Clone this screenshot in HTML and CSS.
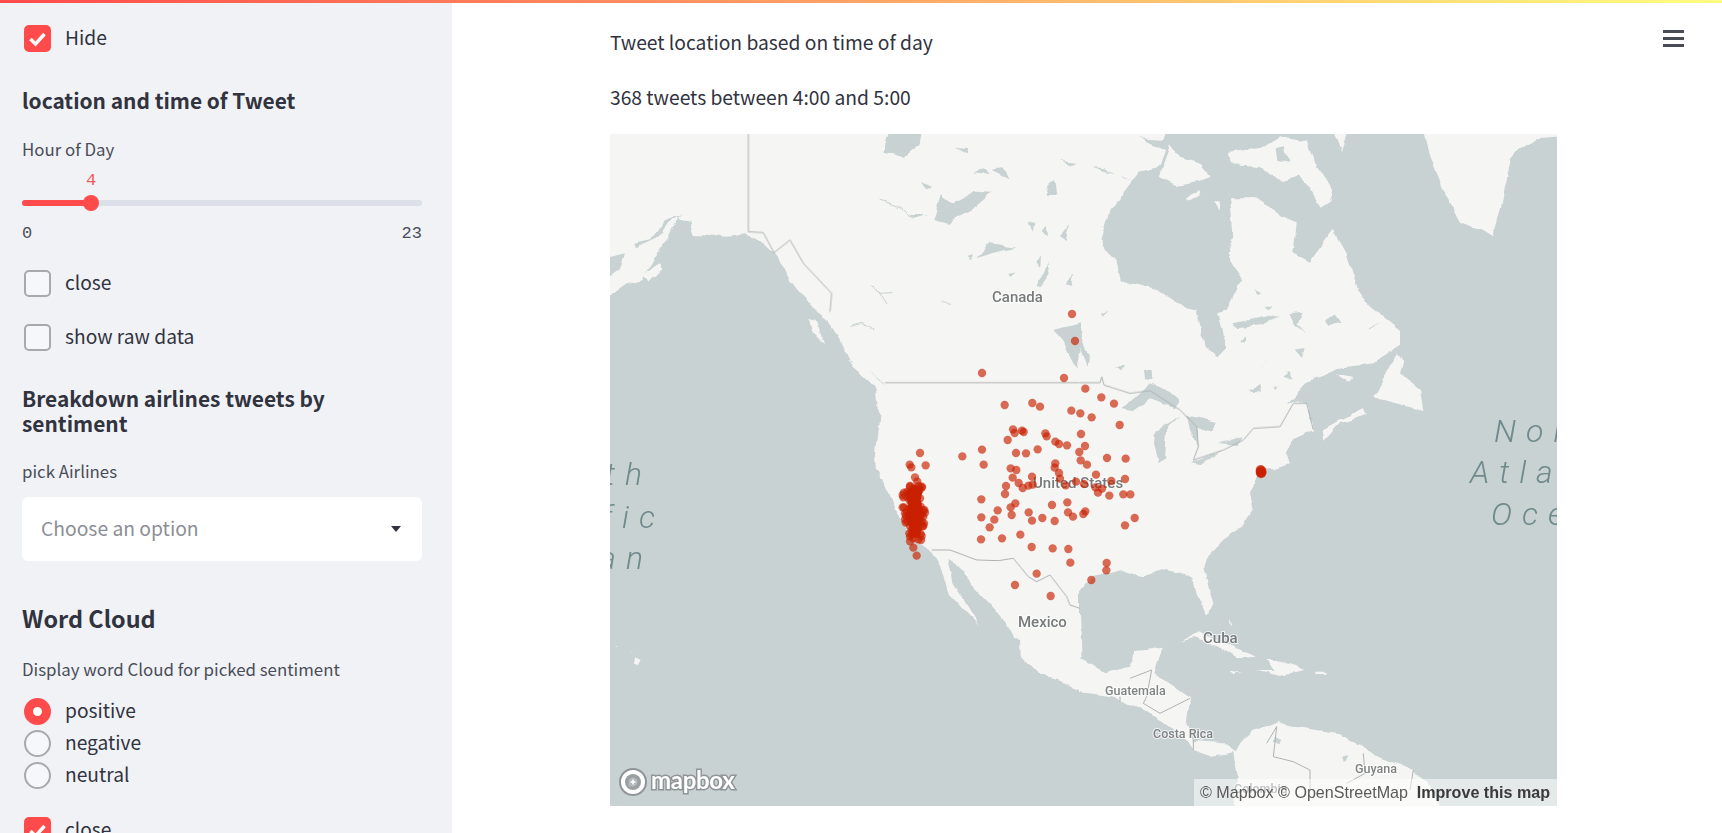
FILE: index.html
```html
<!DOCTYPE html>
<html lang="en">
<head>
<meta charset="utf-8">
<title>Tweet location</title>
<link rel="stylesheet" href="styles.css">
</head>
<body>
<div class="top-bar"></div>
<div class="app">
  <aside class="sidebar">
    <label class="row row-first"><span class="box box-on"><svg viewBox="0 0 27 27" class="tick"><path d="M6.5 14l5 5 9-10"/></svg></span><span class="row-text">Hide</span></label>
    <h3 class="h-small h-location">location and time of Tweet</h3>
    <div class="field-label label-hour">Hour of Day</div>
    <div class="slider">
      <div class="slider-value"><span class="slider-num">4</span></div>
      <div class="track"><div class="track-fill"></div><div class="thumb"></div></div>
      <div class="ticks"><span>0</span><span>23</span></div>
    </div>
    <label class="row row-close"><span class="box"></span><span class="row-text">close</span></label>
    <label class="row row-raw"><span class="box"></span><span class="row-text">show raw data</span></label>
    <h3 class="h-small h-breakdown">Breakdown airlines tweets by sentiment</h3>
    <div class="field-label label-pick">pick Airlines</div>
    <div class="select"><span class="select-text">Choose an option</span><svg class="caret" viewBox="0 0 10 6"><path d="M0 0h10L5 6z"/></svg></div>
    <h2 class="h-large">Word Cloud</h2>
    <div class="field-label label-display">Display word Cloud for picked sentiment</div>
    <div class="radios">
      <label class="row"><span class="radio radio-on"></span><span class="row-text">positive</span></label>
      <label class="row"><span class="radio"></span><span class="row-text">negative</span></label>
      <label class="row"><span class="radio"></span><span class="row-text">neutral</span></label>
    </div>
    <label class="row row-last"><span class="box box-on"><svg viewBox="0 0 27 27" class="tick"><path d="M6.5 14l5 5 9-10"/></svg></span><span class="row-text">close</span></label>
  </aside>
  <main class="main">
    <button class="menu" aria-label="menu"><span></span><span></span><span></span></button>
    <p class="line line-one">Tweet location based on time of day</p>
    <p class="line line-two">368 tweets between 4:00 and 5:00</p>
    <div class="map">
      <svg class="map-svg" viewBox="610 134 947 672">
        <defs>
          <filter id="coast" filterUnits="userSpaceOnUse" x="560" y="84" width="1047" height="772" color-interpolation-filters="sRGB">
            <feTurbulence type="fractalNoise" baseFrequency=".045" numOctaves="3" seed="4" result="noise"/>
            <feDisplacementMap in="SourceGraphic" in2="noise" scale="8" xChannelSelector="R" yChannelSelector="G"/>
            <feGaussianBlur stdDeviation=".35"/>
          </filter>
        </defs>
        <rect class="land" x="610" y="134" width="947" height="672"/>
        <g class="terrain">
        <!-- top-left quadrant -->
        <g transform="translate(600 120) scale(.33333)">
          <path class="water" d="M-10 530L30 525 80 490 130 478 150 440 175 400 215 330 245 285 205 305 175 350 105 382 100 368 150 358 195 300 225 290 245 300 275 305 285 340 320 340 370 350 410 348 440 340 480 362 520 400 560 450 600 520 640 570 680 600 720 660 750 720 790 770 830 810 838 880 835 920 825 1000 828 1055H-10z"/>
          <path class="water" d="M-10 420L75 400 60 450-10 495z"/>
          <path class="land" d="M135 462L180 425 187 450 150 488zM625 600L650 605 672 672 640 640zM740 722L775 735 820 785 790 765zM545 425L575 440 610 510 640 570 620 545 570 480zM500 350L530 395 560 440 520 400z"/>
          <path class="water" d="M850 95L880 -10H980L965 70 910 112 870 100zM960 180L990 195 975 205zM1000 300L1022 220 1060 250 1130 212 1178 215 1115 270 1040 312zM1338 200L1365 178 1372 225 1345 225zM1130 412L1170 370 1250 380 1180 395zM1100 410L1115 405 1112 428zM1312 500L1345 435 1352 460 1325 505zM1305 425L1320 410 1318 442zM1365 630L1440 610V680L1430 745 1405 700 1385 650zM1115 160L1150 145 1170 165zM1175 150L1210 135 1225 175zM1380 120L1430 125 1420 135zM1065 80L1105 85 1100 100zM1280 310L1300 305 1295 335zM1325 330L1340 320 1345 350zM1385 350L1410 315 1400 360zM1400 490L1425 460 1420 495zM1225 465L1248 460 1230 475zM920 285L985 285 940 295 920 285z"/>
          <path class="thin" d="M845 240L900 262 935 295M815 490L855 555M830 520L875 518M1020 545L1050 550M755 620L790 610 820 630"/>
          <path class="water" d="M805 750L850 790 870 835 855 800z"/>
        </g>
        <!-- top-right quadrant -->
        <g transform="translate(1080 120) scale(.33333)">
          <path class="water" d="M65 360L90 270 130 215 175 155 240 140 255 90 175 55 250 60 275 -10H1020L1050 120 1090 210 1140 310 1200 330 1240 355 1260 270 1295 110 1320 80 1370 55 1500 45V1050H550L560 1050 630 1030 615 1000 640 960 700 930 680 850 650 845 620 855 700 770 770 745 880 730 960 680 960 630 860 550 830 500 800 400 760 330 690 425 640 400 650 310 600 290 540 235 450 235 460 340 440 400 485 480 440 570 415 580 440 680 410 710 370 670 350 570 290 550 230 510 120 480 105 420 65 380z"/>
          <path class="land" d="M240 170L270 70 300 110 360 130 395 170 370 180 290 195zM450 100L560 75 600 50 680 60 700 120 750 200 755 240 725 260 660 170 600 185 540 135 455 130zM740 -10H810L780 100zM320 240L355 210 360 225 330 245zM400 240L420 245 415 275zM880 830L950 700 970 720 960 760 1020 810 1030 870 960 850zM730 965L780 910 860 885 850 860 780 900 725 930zM770 760L820 770 810 785zM1060 145L1095 120 1075 150z"/>
          <path class="water" d="M590 90L615 85 625 125 595 120zM30 140L70 145 100 160 60 150zM125 170L155 180 130 175zM65 585L90 572 70 590zM460 610L600 580 540 615 480 625zM625 580L665 575 650 610 680 640 640 610zM735 600L765 580 785 610 745 615zM540 740L570 705 550 730zM610 770L630 755 640 780zM510 810L535 795 540 815zM580 800L595 800 590 810zM860 630L900 605 870 620zM195 750L218 745 220 778 198 775zM0 630L30 710 20 745 0 680zM105 735L135 735 120 748zM480 670L495 650 495 670zM650 695L680 690 672 720zM520 510L545 520 530 525zM555 565L580 555 570 570z"/>
          <path class="water" d="M130 865L210 790 300 840 285 862 210 835 160 870zM225 930L300 885 262 920 255 1020 235 1032 222 970zM320 885L410 905 400 935 350 920 355 980 330 930zM332 1030L430 990 362 1035zM415 970L490 948 470 975z"/>
        </g>
        <!-- bottom-left quadrant -->
        <g transform="translate(600 470) scale(.33333)">
          <path class="water" d="M830 -5L860 60 890 120 930 200 990 240 1020 290 1045 370 1110 440 1160 490 1260 510 1262 560 1310 610 1440 660V1050H-10V-5z"/>
          <path class="water" d="M1045 270L1080 290 1105 335 1175 410 1240 490 1262 565 1150 490 1060 340z"/>
          <path class="land" d="M105 565L122 572 112 592 102 585zM52 528L60 530 56 534zM88 545L96 548 92 551z"/>
        </g>
        <!-- bottom-right quadrant -->
        <g transform="translate(1080 470) scale(.33333)">
          <path class="water" d="M550 -5L525 45 510 70 520 110 490 170 430 210 380 260 370 290 400 400 385 435 350 370 340 330 310 310 250 300 180 320 130 300 40 320 0 370 0 430 5 560 70 610 150 590 170 540 245 530 220 610 330 685 320 760 340 810 420 815 470 850 510 780 600 750 640 770 780 790 850 830 890 860 1000 900 1060 960 1090 1050H1500V-5z"/>
          <path class="water" d="M-10 665L100 680 170 710 240 750 320 810 340 840 400 860 460 850 470 920 465 1050H-10z"/>
          <path class="land" d="M305 515L350 490 430 520 535 560 470 565 420 530 340 505zM560 570L600 570 670 600 600 615 535 600 580 600zM448 605L485 610 460 615zM703 605H733V612H703zM448 445L458 470 452 465z"/>
          <path class="water" d="M590 800L610 810 600 825 588 815zM790 860L805 855 795 880z"/>
        </g>
        </g>
        <!-- country borders -->
        <g transform="translate(600 120) scale(.33333)">
          <path class="border" d="M445 40V335L490 338 522 398 570 360 610 430 695 520 690 575M855 788H1440"/>
        </g>
        <g transform="translate(1080 120) scale(.33333)">
          <path class="border" d="M0 788H60L65 770 72 795 150 820 210 812 300 870 350 920 355 980 340 1020 430 990 490 960 520 925 600 920 640 850 680 850 700 930"/>
        </g>
        <g transform="translate(600 470) scale(.33333)">
          <path class="border" d="M995 240L1050 240 1130 270 1195 272 1240 265 1285 320 1310 335 1350 315 1400 380 1410 405 1440 415"/>
        </g>
        <g transform="translate(1080 470) scale(.33333)">
          <path class="border" d="M150 625L215 600 200 680 190 700 240 730 330 685M120 680V695M340 810V840M560 820L590 770 580 860 640 875 690 900 690 960M850 850L855 910 800 940M1000 900L990 960"/>
        </g>
        <!-- ocean names -->
        <text class="ocean" x="652" y="485" text-anchor="end">North</text>
        <text class="ocean" x="665" y="528" text-anchor="end">Pacific</text>
        <text class="ocean" x="653" y="569" text-anchor="end">Ocean</text>
        <text class="ocean" x="1494" y="442">North</text>
        <text class="ocean" x="1470" y="483">Atlantic</text>
        <text class="ocean" x="1491" y="525">Ocean</text>
        <!-- country names -->
        <text class="place" x="992" y="302">Canada</text>
        <text class="place" x="1033" y="488">United States</text>
        <text class="place" x="1018" y="627">Mexico</text>
        <text class="place" x="1203" y="643">Cuba</text>
        <text class="place place-small" x="1105" y="695">Guatemala</text>
        <text class="place place-small" x="1153" y="738">Costa Rica</text>
        <text class="place place-small" x="1355" y="773">Guyana</text>
        <text class="place place-small" x="1234" y="793">Colombia</text>
        <!-- tweet points -->
        <g class="dots" transform="translate(860 380) scale(.33333)">
          <path class="cluster-core" d="M135 335L160 315 190 320 182 360 190 400 188 440 178 470 150 475 148 440 135 410 145 375z"/>
          <circle r="12.5" cx="636" cy="-198"/><circle r="12.5" cx="645" cy="-117"/><circle r="12.5" cx="366" cy="-21"/><circle r="12.5" cx="612" cy="-6"/>
          <circle r="12.5" cx="676" cy="26"/><circle r="12.5" cx="724" cy="52"/><circle r="12.5" cx="762" cy="71"/><circle r="12.5" cx="434" cy="75"/><circle r="12.5" cx="517" cy="69"/><circle r="12.5" cx="540" cy="80"/><circle r="12.5" cx="634" cy="92"/><circle r="12.5" cx="661" cy="100"/><circle r="12.5" cx="695" cy="112"/><circle r="12.5" cx="779" cy="135"/><circle r="12.5" cx="459" cy="148"/><circle r="12.5" cx="464" cy="159"/><circle r="12.5" cx="486" cy="152"/><circle r="12.5" cx="491" cy="156"/><circle r="12.5" cx="443" cy="180"/><circle r="12.5" cx="556" cy="160"/><circle r="12.5" cx="560" cy="169"/><circle r="12.5" cx="663" cy="162"/><circle r="12.5" cx="586" cy="185"/><circle r="12.5" cx="597" cy="192"/><circle r="12.5" cx="621" cy="196"/><circle r="12.5" cx="675" cy="198"/><circle r="12.5" cx="658" cy="216"/><circle r="12.5" cx="533" cy="208"/><circle r="12.5" cx="468" cy="219"/><circle r="12.5" cx="498" cy="220"/><circle r="12.5" cx="366" cy="209"/><circle r="12.5" cx="307" cy="229"/><circle r="12.5" cx="371" cy="254"/><circle r="12.5" cx="741" cy="234"/><circle r="12.5" cx="797" cy="236"/><circle r="12.5" cx="662" cy="241"/><circle r="12.5" cx="681" cy="254"/><circle r="12.5" cx="586" cy="250"/><circle r="12.5" cx="584" cy="263"/><circle r="12.5" cx="452" cy="265"/><circle r="12.5" cx="469" cy="270"/><circle r="12.5" cx="597" cy="279"/><circle r="12.5" cx="708" cy="284"/><circle r="12.5" cx="458" cy="293"/><circle r="12.5" cx="516" cy="290"/><circle r="12.5" cx="600" cy="296"/><circle r="12.5" cx="795" cy="297"/><circle r="12.5" cx="476" cy="309"/><circle r="12.5" cx="505" cy="317"/><circle r="12.5" cx="518" cy="314"/><circle r="12.5" cx="488" cy="324"/><circle r="12.5" cx="617" cy="316"/><circle r="12.5" cx="648" cy="305"/><circle r="12.5" cx="672" cy="312"/><circle r="12.5" cx="754" cy="303"/><circle r="12.5" cx="706" cy="322"/><circle r="12.5" cx="726" cy="326"/><circle r="12.5" cx="714" cy="338"/><circle r="12.5" cx="438" cy="318"/><circle r="12.5" cx="435" cy="342"/><circle r="12.5" cx="748" cy="347"/><circle r="12.5" cx="790" cy="343"/><circle r="12.5" cx="811" cy="343"/><circle r="12.5" cx="364" cy="358"/><circle r="12.5" cx="622" cy="367"/><circle r="12.5" cx="466" cy="370"/><circle r="12.5" cx="452" cy="382"/><circle r="12.5" cx="413" cy="391"/><circle r="12.5" cx="576" cy="375"/><circle r="12.5" cx="506" cy="397"/><circle r="12.5" cx="624" cy="397"/><circle r="12.5" cx="676" cy="394"/><circle r="12.5" cx="670" cy="402"/><circle r="12.5" cx="639" cy="410"/><circle r="12.5" cx="455" cy="405"/><circle r="12.5" cx="364" cy="412"/><circle r="12.5" cx="403" cy="419"/><circle r="12.5" cx="547" cy="414"/><circle r="12.5" cx="516" cy="422"/><circle r="12.5" cx="584" cy="423"/><circle r="12.5" cx="389" cy="442"/><circle r="12.5" cx="824" cy="414"/><circle r="12.5" cx="795" cy="436"/><circle r="12.5" cx="481" cy="464"/><circle r="12.5" cx="363" cy="478"/><circle r="12.5" cx="426" cy="475"/><circle r="12.5" cx="515" cy="501"/><circle r="12.5" cx="578" cy="505"/><circle r="12.5" cx="625" cy="507"/><circle r="12.5" cx="631" cy="548"/><circle r="12.5" cx="740" cy="549"/><circle r="12.5" cx="739" cy="571"/><circle r="12.5" cx="694" cy="600"/><circle r="12.5" cx="530" cy="581"/><circle r="12.5" cx="465" cy="615"/><circle r="12.5" cx="572" cy="648"/>
          <circle r="12.5" cx="180" cy="219"/><circle r="12.5" cx="149" cy="254"/><circle r="12.5" cx="154" cy="262"/><circle r="12.5" cx="197" cy="256"/><circle r="12.5" cx="165" cy="292"/><circle r="12.5" cx="172" cy="305"/><circle r="12.5" cx="170" cy="527"/><circle r="12.5" cx="160" cy="503"/><circle r="12.5" cx="150" cy="484"/><circle r="12.5" cx="183" cy="480"/>
          <circle r="12.5" cx="150" cy="320"/><circle r="12.5" cx="185" cy="320"/><circle r="12.5" cx="142" cy="335"/><circle r="12.5" cx="160" cy="325"/><circle r="12.5" cx="178" cy="332"/><circle r="12.5" cx="140" cy="350"/><circle r="12.5" cx="155" cy="345"/><circle r="12.5" cx="170" cy="345"/><circle r="12.5" cx="148" cy="360"/><circle r="12.5" cx="165" cy="358"/><circle r="12.5" cx="180" cy="355"/><circle r="12.5" cx="155" cy="372"/><circle r="12.5" cx="172" cy="370"/><circle r="12.5" cx="132" cy="382"/><circle r="12.5" cx="148" cy="385"/><circle r="12.5" cx="165" cy="382"/><circle r="12.5" cx="182" cy="380"/><circle r="12.5" cx="190" cy="392"/><circle r="12.5" cx="140" cy="395"/><circle r="12.5" cx="155" cy="398"/><circle r="12.5" cx="172" cy="395"/><circle r="12.5" cx="185" cy="405"/><circle r="12.5" cx="138" cy="408"/><circle r="12.5" cx="150" cy="410"/><circle r="12.5" cx="165" cy="410"/><circle r="12.5" cx="178" cy="412"/><circle r="12.5" cx="142" cy="425"/><circle r="12.5" cx="155" cy="422"/><circle r="12.5" cx="170" cy="425"/><circle r="12.5" cx="185" cy="425"/><circle r="12.5" cx="150" cy="438"/><circle r="12.5" cx="165" cy="438"/><circle r="12.5" cx="188" cy="438"/><circle r="12.5" cx="155" cy="450"/><circle r="12.5" cx="172" cy="450"/><circle r="12.5" cx="155" cy="462"/><circle r="12.5" cx="170" cy="462"/><circle r="12.5" cx="182" cy="462"/><circle r="12.5" cx="160" cy="475"/>
          <circle r="12.5" cx="128" cy="345"/><circle r="12.5" cx="130" cy="352"/><circle r="12.5" cx="132" cy="338"/><circle r="12.5" cx="150" cy="318"/><circle r="12.5" cx="186" cy="322"/><circle r="12.5" cx="176" cy="318"/><circle r="12.5" cx="128" cy="382"/><circle r="12.5" cx="193" cy="390"/><circle r="12.5" cx="195" cy="398"/><circle r="12.5" cx="190" cy="410"/><circle r="12.5" cx="135" cy="400"/><circle r="12.5" cx="135" cy="418"/><circle r="12.5" cx="137" cy="428"/><circle r="12.5" cx="190" cy="438"/><circle r="12.5" cx="192" cy="430"/><circle r="12.5" cx="148" cy="460"/><circle r="12.5" cx="185" cy="468"/><circle r="12.5" cx="150" cy="470"/><circle r="12.5" cx="175" cy="478"/>
          <circle r="15" cx="1203" cy="272"/><circle r="15" cx="1204" cy="278"/><circle r="15" cx="1202" cy="270"/><circle r="15" cx="1205" cy="275"/><circle r="15" cx="1203" cy="280"/><circle r="15" cx="1202" cy="276"/>
        </g>
        <!-- mapbox logo -->
        <g class="logo">
          <circle class="logo-ring" cx="633" cy="782" r="13"/>
          <circle class="logo-core" cx="633" cy="782" r="8"/>
          <path class="logo-pin" d="M628.5 786.5V782a4.5 4.5 0 1 1 4.5 4.5z"/>
          <path class="logo-plus" d="M633 779.5v5M630.5 782h5"/>
          <text class="logo-word" x="651" y="789">mapbox</text>
        </g>
      </svg>
      <div class="attribution"><span>© Mapbox © OpenStreetMap</span><strong>Improve this map</strong></div>
    </div>
  </main>
</div>
</body>
</html>
```
FILE: styles.css
```css
* { box-sizing: border-box; }
html, body { margin: 0; height: 100%; overflow: hidden; background: #fff; }
body {
  display: flex;
  flex-direction: column;
  font-family: "Noto Sans CJK SC", "Noto Sans", sans-serif;
  color: #31333f;
}
.top-bar { height: 3px; flex: none; background: linear-gradient(90deg, #ff4b4b, #fffd80); }
.app { flex: 1; display: flex; min-height: 0; }

/* sidebar */
.sidebar {
  width: 452px; flex: none; background: #f0f2f6; overflow: hidden;
  padding: 22px 30px 0 22px;
}
.row { display: flex; align-items: center; height: 27px; padding-left: 2px; font-size: 19.2px; color: #31333f; }
.row-text { margin-left: 14px; line-height: 25px; padding-bottom: 2px; }
.box, .radio {
  width: 27px; height: 27px; flex: none; display: block;
  border: 2px solid #a6a9ae; background: #f6f7fa; border-radius: 5px;
}
.box-on { background: #ff4b4b; border-color: #ff4b4b; position: relative; }
.tick { position: absolute; left: -2px; top: -2px; width: 27px; height: 27px; }
.tick path { fill: none; stroke: #fff; stroke-width: 3.4; }
.radio { border-radius: 50%; }
.radio-on { background: #fff; border: 9px solid #ff4b4b; }
.h-small { margin: 0; font-size: 20.9px; line-height: 25px; font-weight: 700; color: #31333f; }
.h-location { margin-top: 34px; line-height: 28px; }
.h-breakdown { margin-top: 35px; }
.h-large { margin: 41px 0 0; padding-bottom: 1px; font-size: 23.4px; line-height: 32px; font-weight: 700; color: #31333f; }
.field-label { font-size: 16.85px; line-height: 20px; color: #4a4d58; }
.label-hour { margin-top: 25px; }
.label-pick { margin-top: 25px; }
.label-display { margin-top: 24px; }
.slider { margin-top: 12px; }
.slider-value { position: relative; height: 18px; }
.slider-num { position: absolute; left: 64px; top: 1px; font: 17px/18px "Liberation Mono", monospace; color: #ef5b5b; }
.track { position: relative; height: 6px; margin-top: 11px; border-radius: 3px; background: #dce0e8; }
.track-fill { width: 69px; height: 6px; border-radius: 3px; background: #ff4b4b; }
.thumb { position: absolute; left: 61px; top: -5px; width: 16px; height: 16px; border-radius: 50%; background: #ff4b4b; }
.ticks { display: flex; justify-content: space-between; margin-top: 19px; font: 17px/18px "Liberation Mono", monospace; color: #4a4d58; }
.row-close { margin-top: 27px; }
.row-raw { margin-top: 27px; }
.select {
  margin-top: 16px; height: 64px; border-radius: 6px; background: #fff;
  display: flex; align-items: center; justify-content: space-between;
  padding: 0 21px 0 19px; font-size: 19.3px; color: #8b8e95;
}
.select-text { padding-bottom: 2px; }
.caret { width: 10px; height: 6px; }
.caret path { fill: #31333f; }
.radios { margin-top: 19px; display: flex; flex-direction: column; gap: 5px; }
.row-last { margin-top: 28px; }

/* main */
.main { flex: 1; position: relative; padding: 27px 0 0 158px; }
.menu {
  position: absolute; left: 1211px; top: 27px; width: 21px; height: 17px; padding: 0;
  border: 0; background: none; display: flex; flex-direction: column; justify-content: space-between;
}
.menu span { display: block; height: 3px; width: 21px; background: #4a4c55; }
.line { margin: 0; font-size: 19.25px; line-height: 24px; color: #31333f; }
.line-two { margin-top: 31px; }
.map { position: relative; width: 947px; height: 672px; margin-top: 25px; overflow: hidden; }
.map-svg { display: block; width: 947px; height: 672px; filter: blur(.35px); }
.terrain { filter: url(#coast); }
.land { fill: #f5f5f3; }
.water { fill: #c9d2d3; }
.border { fill: none; stroke: #aeb3b4; stroke-width: 3; }
.thin { fill: none; stroke: #c9d2d3; stroke-width: 3; }
.dots circle { fill: #c82000; fill-opacity: .66; }
.cluster-core { fill: #c92200; }
.ocean { font: italic 300 32px Roboto, sans-serif; letter-spacing: 10px; fill: #6f8a8c; }
.place {
  font: 500 15px Roboto, sans-serif; fill: #777a7b;
  stroke: rgba(255,255,255,.7); stroke-width: 2px; paint-order: stroke;
}
.place-small { font-size: 12.5px; fill: #808283; }
.logo-ring { fill: #fff; stroke: #8f9496; stroke-width: 2; }
.logo-core { fill: #9a9fa1; }
.logo-pin { fill: #b5b9bb; }
.logo-plus { fill: none; stroke: #fff; stroke-width: 1.6; }
.logo-word {
  font: 700 24px Lato, sans-serif; fill: #fff; letter-spacing: -.3px;
  stroke: #8f9496; stroke-width: 3px; paint-order: stroke;
}
.attribution {
  position: absolute; right: 0; bottom: 0; width: 363px; height: 27px;
  background: rgba(255,255,255,.5); padding: 0 7px 0 6px;
  display: flex; align-items: center; justify-content: space-between;
  font: 16.1px/27px "Liberation Sans", sans-serif; color: #5a5a5a;
}
.attribution strong { color: #3a3a3a; font-weight: 700; }
```
